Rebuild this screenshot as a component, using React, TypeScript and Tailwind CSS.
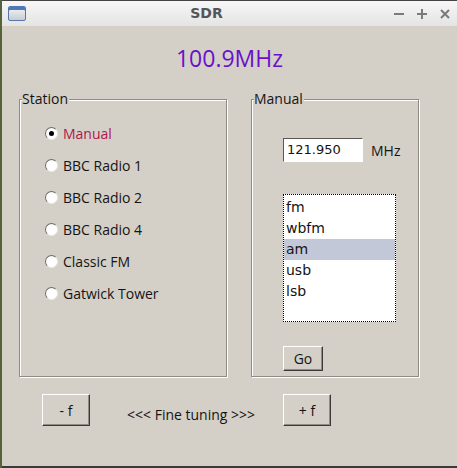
import React from "react";

const STATIONS = ["Manual", "BBC Radio 1", "BBC Radio 2", "BBC Radio 4", "Classic FM", "Gatwick Tower"];
const MODES = ["fm", "wbfm", "am", "usb", "lsb"];

function Radio({ label, checked }: { label: string; checked?: boolean }) {
  return (
    <div className="flex h-[32px] items-center">
      <span className="flex size-[13px] items-center justify-center rounded-full border border-b-[#e8e8e8] border-l-[#6e6b66] border-r-[#e8e8e8] border-t-[#6e6b66] bg-white">
        {checked && <span className="size-[5px] rounded-full bg-black" />}
      </span>
      <span className={"ml-[5px] text-[14px] " + (checked ? "text-[#b0174b]" : "text-[#141414]")}>{label}</span>
    </div>
  );
}

function Group({ title, className, children }: { title: string; className: string; children: React.ReactNode }) {
  return (
    <div className={"relative h-[278px] border border-[#8f8c86] shadow-[inset_1px_1px_0_#ffffff,1px_1px_0_#ffffff] " + className}>
      <span className="absolute -top-[10px] left-[2px] bg-[#d4d0c8] pr-[1px] text-[14px] leading-[18px] text-[#141414]">{title}</span>
      {children}
    </div>
  );
}

function Button({ label, className }: { label: string; className: string }) {
  return (
    <div className={"flex items-center justify-center border border-b-[#3c3a36] border-l-white border-r-[#3c3a36] border-t-white bg-[#d4d0c8] text-[14px] text-[#141414] shadow-[inset_-1px_-1px_0_#8f8c86] " + className}>
      {label}
    </div>
  );
}

export default function App() {
  return (
    <div className="flex h-[468px] w-[457px] bg-[#55623a] pl-[2px]" style={{ fontFamily: '"Open Sans", "Noto Sans", sans-serif' }}>
      <div className="flex w-full flex-col">
        <div className="relative flex h-[26px] items-center border-t border-[#444] bg-gradient-to-b from-[#f7f7f7] to-[#e4e4e4]">
          <div className="ml-[6px] h-[15px] w-[18px] rounded-[2px] border border-[#5577aa] bg-gradient-to-b from-[#f4f4f4] to-[#c9cdd3] shadow-[inset_0_3px_0_#4b78c0]" />
          <span className="absolute left-0 right-[46px] text-center text-[14px] font-bold text-[#555]" style={{ fontFamily: '"DejaVu Sans", sans-serif' }}>SDR</span>
          <div className="ml-auto mr-[6px] flex items-center gap-[11px] text-[#7a7a7a]">
            <svg width="12" height="12" viewBox="0 0 12 12"><path d="M1 6h10" stroke="currentColor" strokeWidth="2" /></svg>
            <svg width="12" height="12" viewBox="0 0 12 12"><path d="M1 6h10M6 1v10" stroke="currentColor" strokeWidth="2" /></svg>
            <svg width="12" height="12" viewBox="0 0 12 12"><path d="M2 2l8 8M10 2l-8 8" stroke="currentColor" strokeWidth="2" /></svg>
          </div>
        </div>
        <div className="flex flex-1 flex-col border-b-2 border-[#3a3a3a] bg-[#d4d0c8]">
          <div className="mt-[18px] text-center text-[23px] leading-[28px] text-[#6a0fcc]">100.9MHz</div>
          <div className="ml-[17px] mt-[27px] flex gap-[24px]">
            <Group title="Station" className="w-[208px]">
              <div className="ml-[25px] mt-[17px]">
                {STATIONS.map((s, i) => (
                  <Radio key={s} label={s} checked={i === 0} />
                ))}
              </div>
            </Group>
            <Group title="Manual" className="w-[168px]">
              <div className="ml-[31px] mt-[38px] flex items-center">
                <div className="flex h-[24px] w-[80px] items-center border border-b-white border-l-[#5a5852] border-r-white border-t-[#5a5852] bg-white pl-[3px] text-[13px] text-[#141414]" style={{ fontFamily: '"DejaVu Sans", sans-serif' }}>
                  121.950
                </div>
                <span className="ml-[8px] text-[14px] text-[#141414]">MHz</span>
              </div>
              <div className="ml-[31px] mt-[32px] h-[128px] w-[113px] border border-dotted border-black bg-white pt-[2px] text-[14px] leading-[21px] text-[#141414]" style={{ fontFamily: '"DejaVu Sans", sans-serif' }}>
                {MODES.map((m) => (
                  <div key={m} className={"pl-[2px] " + (m === "am" ? "bg-[#c3c8d9]" : "")}>
                    {m}
                  </div>
                ))}
              </div>
              <Button label="Go" className="ml-[31px] mt-[24px] h-[25px] w-[40px]" />
            </Group>
          </div>
          <div className="mt-[17px] flex items-center">
            <Button label="- f" className="ml-[40px] h-[32px] w-[48px]" />
            <span className="ml-[37px] mt-[9px] w-[127px] whitespace-nowrap text-[14px] text-[#141414]">&lt;&lt;&lt; Fine tuning &gt;&gt;&gt;</span>
            <Button label="+ f" className="ml-[29px] h-[32px] w-[48px]" />
          </div>
        </div>
      </div>
    </div>
  );
}
